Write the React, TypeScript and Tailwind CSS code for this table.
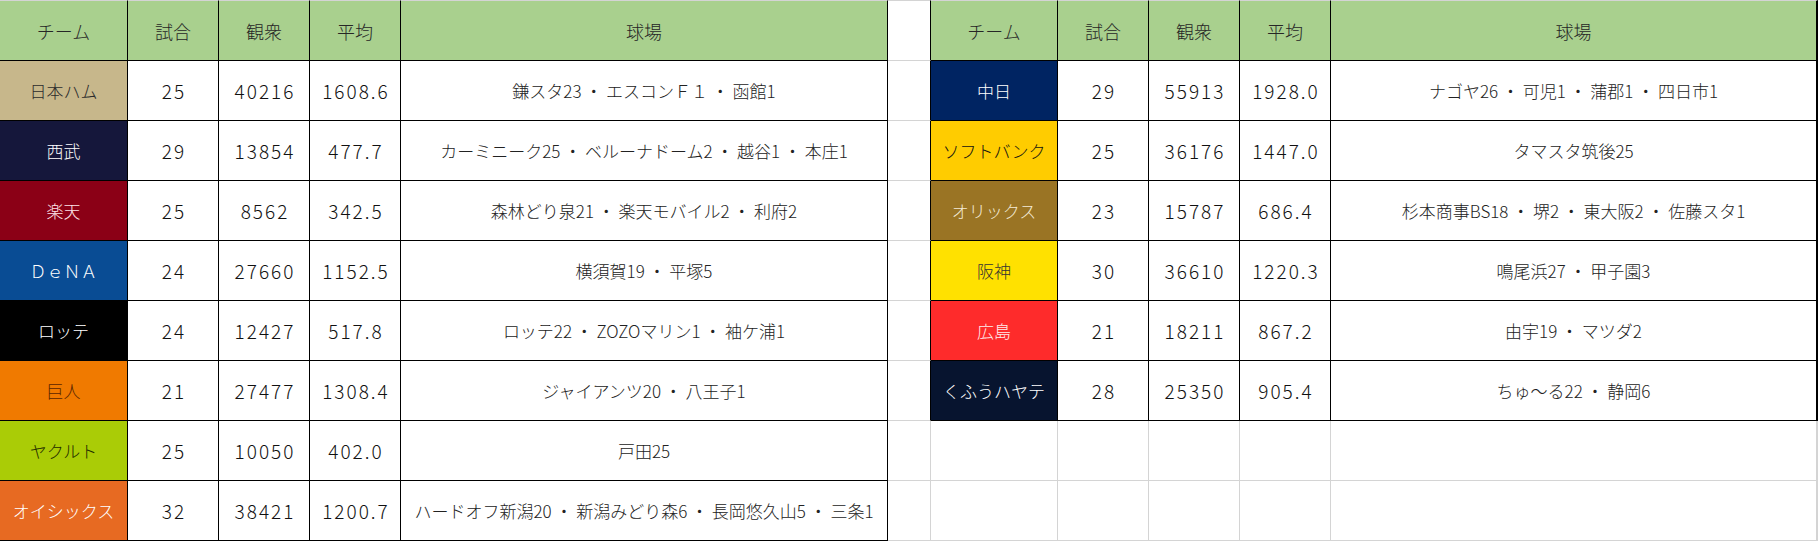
import type { ReactNode } from 'react';

type Team = {
  name: string;
  bg: string;
  fg: string;
  games: number;
  crowd: number;
  avg: string;
  parks: string;
};

const pacific: Team[] = [
  { name: '日本ハム', bg: 'bg-[#c7b78b]', fg: 'text-[#2b2b2b]', games: 25, crowd: 40216, avg: '1608.6', parks: '鎌スタ23 ・ エスコンＦ１ ・ 函館1' },
  { name: '西武', bg: 'bg-[#15173b]', fg: 'text-white', games: 29, crowd: 13854, avg: '477.7', parks: 'カーミニーク25 ・ ベルーナドーム2 ・ 越谷1 ・ 本庄1' },
  { name: '楽天', bg: 'bg-[#8b0016]', fg: 'text-[#ffe4e8]', games: 25, crowd: 8562, avg: '342.5', parks: '森林どり泉21 ・ 楽天モバイル2 ・ 利府2' },
  { name: 'ＤｅＮＡ', bg: 'bg-[#094c94]', fg: 'text-white', games: 24, crowd: 27660, avg: '1152.5', parks: '横須賀19 ・ 平塚5' },
  { name: 'ロッテ', bg: 'bg-black', fg: 'text-white', games: 24, crowd: 12427, avg: '517.8', parks: 'ロッテ22 ・ ZOZOマリン1 ・ 袖ケ浦1' },
  { name: '巨人', bg: 'bg-[#f07a00]', fg: 'text-[#5a2500]', games: 21, crowd: 27477, avg: '1308.4', parks: 'ジャイアンツ20 ・ 八王子1' },
  { name: 'ヤクルト', bg: 'bg-[#aacc06]', fg: 'text-[#1e2a00]', games: 25, crowd: 10050, avg: '402.0', parks: '戸田25' },
  { name: 'オイシックス', bg: 'bg-[#e76a22]', fg: 'text-white', games: 32, crowd: 38421, avg: '1200.7', parks: 'ハードオフ新潟20 ・ 新潟みどり森6 ・ 長岡悠久山5 ・ 三条1' },
];

const western: Team[] = [
  { name: '中日', bg: 'bg-[#002462]', fg: 'text-white', games: 29, crowd: 55913, avg: '1928.0', parks: 'ナゴヤ26 ・ 可児1 ・ 蒲郡1 ・ 四日市1' },
  { name: 'ソフトバンク', bg: 'bg-[#ffcc00]', fg: 'text-[#111]', games: 25, crowd: 36176, avg: '1447.0', parks: 'タマスタ筑後25' },
  { name: 'オリックス', bg: 'bg-[#9a7424]', fg: 'text-[#f3ead6]', games: 23, crowd: 15787, avg: '686.4', parks: '杉本商事BS18 ・ 堺2 ・ 東大阪2 ・ 佐藤スタ1' },
  { name: '阪神', bg: 'bg-[#ffe100]', fg: 'text-[#333]', games: 30, crowd: 36610, avg: '1220.3', parks: '鳴尾浜27 ・ 甲子園3' },
  { name: '広島', bg: 'bg-[#fe2b2b]', fg: 'text-[#ffecec]', games: 21, crowd: 18211, avg: '867.2', parks: '由宇19 ・ マツダ2' },
  { name: 'くふうハヤテ', bg: 'bg-[#07142f]', fg: 'text-white', games: 28, crowd: 25350, avg: '905.4', parks: 'ちゅ〜る22 ・ 静岡6' },
];

const headers = ['チーム', '試合', '観衆', '平均', '球場'];

function Cell({ children, className }: { children?: ReactNode; className: string }) {
  return <div className={`flex items-center justify-center whitespace-nowrap ${className}`}>{children}</div>;
}

// one table half: 5 columns, header + 8 rows; filled rows have black rules, empty ones gray
function Half({ teams, side }: { teams: Team[]; side: 'left' | 'right' }) {
  const last = side === 'left' ? 'border-r' : 'border-r-2';
  const rows = Array.from({ length: 8 }, (_, i) => teams[i]);
  const num = 'border-r border-b border-black text-[19px] tracking-[2px] pl-[2px] text-[#111]';
  return (
    <>
      {headers.map((h, c) => (
        <Cell
          key={h}
          className={`bg-[#a9d08e] text-[#262626] text-[18px] border-t border-t-[#d4d4d4] border-b border-b-black border-r-black ${c === 4 ? last : 'border-r'}`}
        >
          {h}
        </Cell>
      ))}
      {rows.map((t, i) =>
        t ? (
          [
            <Cell key={`${i}a`} className={`${t.bg} ${t.fg} border-r border-b border-black`}>{t.name}</Cell>,
            <Cell key={`${i}b`} className={num}>{t.games}</Cell>,
            <Cell key={`${i}c`} className={num}>{t.crowd}</Cell>,
            <Cell key={`${i}d`} className={num}>{t.avg}</Cell>,
            <Cell key={`${i}e`} className={`border-b border-black text-[#222] ${last}`}>{t.parks}</Cell>,
          ]
        ) : (
          [
            <Cell key={`${i}a`} className="border-r border-b border-[#d4d4d4]" />,
            <Cell key={`${i}b`} className="border-r border-b border-[#d4d4d4]" />,
            <Cell key={`${i}c`} className="border-r border-b border-[#d4d4d4]" />,
            <Cell key={`${i}d`} className="border-r border-b border-[#d4d4d4]" />,
            <Cell key={`${i}e`} className={`border-b border-[#d4d4d4] ${last}`} />,
          ]
        )
      )}
    </>
  );
}

export default function App() {
  return (
    <div className="w-[1818px] h-[541px] bg-white flex font-['Noto_Sans_CJK_JP','Noto_Sans',sans-serif] font-light text-[17px] text-black leading-none">
      <div className="grid grid-cols-[128px_91px_91px_91px_487px] grid-rows-[61px_repeat(8,60px)]">
        <Half teams={pacific} side="left" />
      </div>
      <div className="grid w-[43px] grid-rows-[61px_repeat(8,60px)]">
        {Array.from({ length: 9 }, (_, r) => (
          <div
            key={r}
            className={`border-b border-b-[#d4d4d4] border-r ${r === 0 ? 'border-t border-t-[#d4d4d4]' : ''} ${r <= 6 ? 'border-r-black' : 'border-r-[#d4d4d4]'}`}
          />
        ))}
      </div>
      <div className="grid grid-cols-[127px_91px_91px_91px_487px] grid-rows-[61px_repeat(8,60px)]">
        <Half teams={western} side="right" />
      </div>
    </div>
  );
}
